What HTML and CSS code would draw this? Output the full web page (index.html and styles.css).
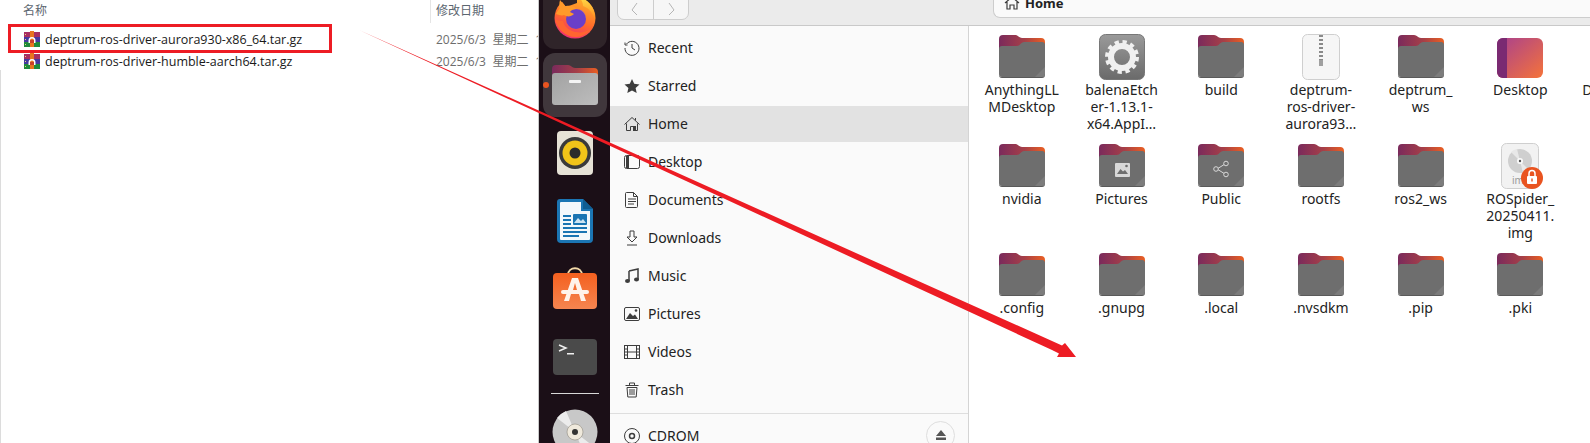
FILE: index.html
```html
<!DOCTYPE html>
<html lang="en">
<head>
<meta charset="utf-8">
<title>deptrum-ros-driver</title>
<link rel="stylesheet" href="styles.css">
</head>
<body>

<svg class="defs" width="0" height="0" aria-hidden="true">
	<defs>
		<linearGradient id="tabGrad" x1="0" y1="0" x2="1" y2="0">
			<stop offset="0" stop-color="#7a2a5c"/>
			<stop offset=".55" stop-color="#a63f48"/>
			<stop offset="1" stop-color="#ea5f22"/>
		</linearGradient>
		<linearGradient id="deskGrad" x1="0" y1="0" x2="1" y2="1">
			<stop offset="0" stop-color="#a8408f"/>
			<stop offset="1" stop-color="#f5733a"/>
		</linearGradient>
		<linearGradient id="gearGrad" x1="0" y1="0" x2="0" y2="1">
			<stop offset="0" stop-color="#9a9a9a"/>
			<stop offset="1" stop-color="#6a6a6a"/>
		</linearGradient>
		<linearGradient id="shopGrad" x1="0" y1="0" x2="0" y2="1">
			<stop offset="0" stop-color="#f4601f"/>
			<stop offset="1" stop-color="#f58550"/>
		</linearGradient>
		<linearGradient id="filesGrad" x1="0" y1="0" x2="1" y2="1">
			<stop offset="0" stop-color="#a2a2a2"/>
			<stop offset="1" stop-color="#bdbdbd"/>
		</linearGradient>
		<linearGradient id="foxGrad" x1=".7" y1="0" x2=".3" y2="1">
			<stop offset="0" stop-color="#ffb32a"/>
			<stop offset=".55" stop-color="#ff6a2a"/>
			<stop offset="1" stop-color="#ee2a78"/>
		</linearGradient>
		<linearGradient id="flameGrad" x1="0" y1="0" x2="0" y2="1">
			<stop offset="0" stop-color="#ffe04a"/>
			<stop offset="1" stop-color="#ff8a1f"/>
		</linearGradient>

		<symbol id="folder" viewBox="0 0 46 46">
			<path d="M0 5a4 4 0 0 1 4-4h12c3 0 4 3 7 3h19a4 4 0 0 1 4 4v16H0z" fill="url(#tabGrad)"/>
			<path d="M0 15a3 3 0 0 1 3-3h15c3 0 4-4 7-4h18a3 3 0 0 1 3 3v29a3 3 0 0 1-3 3H3a3 3 0 0 1-3-3z" fill="#6e6e6e"/>
			<path d="M46 33v7a3 3 0 0 1-3 3h-7z" fill="#7c7c7c"/>
			<path d="M0 40a3 3 0 0 0 3 3h40a3 3 0 0 0 3-3v1a3 3 0 0 1-3 3H3a3 3 0 0 1-3-3z" fill="#5a5a5a"/>
		</symbol>

		<symbol id="rar" viewBox="0 0 16 16">
			<rect x="0" y="1" width="16" height="5" fill="#a82f62"/>
			<rect x="0" y="6" width="16" height="5" fill="#45399f"/>
			<rect x="0" y="11" width="16" height="5" fill="#1f8a3c"/>
			<path d="M1 3h1v1H1zM1 8h1v1H1zM1 13h1v1H1z" fill="#e8e070"/>
			<rect x="6" y="0" width="4" height="16" fill="#e8751f"/>
			<path d="M4.500 12V9.500a3.500 3.500 0 0 1 7 0V12h-1.500V9.500a2 2 0 0 0-4 0V12z" fill="#fff"/>
			<rect x="6" y="9" width="4" height="3" fill="#c8402a"/>
		</symbol>
	</defs>
</svg>

<div class="screen">

	<section class="winpane">
		<div class="win-head">
			<div class="win-col-name">名称</div>
			<div class="win-col-date">修改日期</div>
		</div>
		<div class="win-row">
			<div class="win-name"><svg class="win-icon"><use href="#rar"/></svg>deptrum-ros-driver-aurora930-x86_64.tar.gz</div>
			<div class="win-date">2025/6/3 星期二 11:18</div>
		</div>
		<div class="win-row">
			<div class="win-name"><svg class="win-icon"><use href="#rar"/></svg>deptrum-ros-driver-humble-aarch64.tar.gz</div>
			<div class="win-date">2025/6/3 星期二 11:18</div>
		</div>
	</section>

	<nav class="dock">
		<div class="dock-slot is-open">
			<svg width="44" height="44" viewBox="0 0 44 44">
				<circle cx="22" cy="23" r="20.500" fill="url(#foxGrad)"/>
				<path d="M7 4l6 8 11-4V0H4z" fill="#2f2429"/>
				<path d="M7 5c-1 4-1 7 0 10l6-3z" fill="#ff9a2a"/>
				<path d="M25 1c9 3 18 11 17 24-2-7-6-12-12-14 0-4-2-7-5-10z" fill="url(#flameGrad)"/>
				<circle cx="23" cy="24" r="10" fill="#6a3fc8"/>
				<path d="M23 14a10 10 0 0 1 10 10c0-6-4-10-10-10z" fill="#8a5fe0"/>
				<path d="M3 19c2-5 6-8 10-8 4-1 8 0 11 3-4 0-6 1-7 3 1 1 3 1 4 2-3 3-7 3-10 1-2 1-5 0-8-1z" fill="#ff9a2a"/>
				<path d="M2 24c2 10 11 19 22 18 9-1 15-7 18-16-2 8-10 13-19 11-7-1-12-6-13-11-3 0-6-1-8-2z" fill="#ff6530"/>
			</svg>
		</div>
		<div class="dock-slot is-open is-running">
			<svg width="46" height="42" viewBox="0 0 46 42">
				<path d="M0 5a4 4 0 0 1 4-4h12c3 0 4 3 7 3h19a4 4 0 0 1 4 4v14H0z" fill="url(#tabGrad)"/>
				<path d="M0 12a3 3 0 0 1 3-3h40a3 3 0 0 1 3 3v26a3 3 0 0 1-3 3H3a3 3 0 0 1-3-3z" fill="url(#filesGrad)"/>
				<rect x="17" y="16" width="12" height="3" rx="1" fill="#f4f4f4"/>
			</svg>
		</div>
		<div class="dock-slot">
			<svg width="36" height="44" viewBox="0 0 36 44">
				<rect width="36" height="44" rx="4" fill="#e6e2d6"/>
				<circle cx="18" cy="22" r="16" fill="#3a3a3a"/>
				<circle cx="18" cy="22" r="12.500" fill="#f1c419"/>
				<circle cx="18" cy="22" r="5.500" fill="#2b2b2b"/>
			</svg>
		</div>
		<div class="dock-slot">
			<svg width="36" height="44" viewBox="0 0 36 44">
				<path d="M3 0h23l10 10v30a4 4 0 0 1-4 4H4a4 4 0 0 1-4-4V3a3 3 0 0 1 3-3z" fill="#1b75b3"/>
				<path d="M4 3h20v9h9v28a1 1 0 0 1-1 1H4a1 1 0 0 1-1-1V4a1 1 0 0 1 1-1z" fill="#f4f8fb"/>
				<path d="M26 0l10 10H26z" fill="#0f5d92"/>
				<g fill="#1b75b3">
					<rect x="6" y="16" width="8" height="2"/>
					<rect x="6" y="20" width="8" height="2"/>
					<rect x="6" y="24" width="8" height="2"/>
					<rect x="6" y="28" width="24" height="2"/>
					<rect x="6" y="32" width="24" height="2"/>
					<rect x="6" y="36" width="16" height="2"/>
					<rect x="16" y="15" width="14" height="11" rx="1"/>
				</g>
				<path d="M17 24l4-5 3 3 2-2 3 4z" fill="#cfe4f2"/>
			</svg>
		</div>
		<div class="dock-slot">
			<svg width="44" height="44" viewBox="0 0 44 44">
				<path d="M15 8c0-9 14-9 14 0" fill="none" stroke="#f2d9a8" stroke-width="1.800"/>
				<rect y="6" width="44" height="36" rx="4" fill="url(#shopGrad)"/>
				<path d="M19 11h6l8 23h-5l-2-7h-8l-2 7h-5zM20 23h4l-2-7z" fill="#fff3ea"/>
				<rect x="8" y="23" width="28" height="4" rx="2" fill="#fff3ea"/>
			</svg>
		</div>
		<div class="dock-slot">
			<svg width="44" height="36" viewBox="0 0 44 36">
				<rect width="44" height="36" rx="4" fill="#4a4a4a"/>
				<path d="M6 6l7 3-7 3" fill="none" stroke="#f0f0f0" stroke-width="1.500"/>
				<rect x="14" y="14" width="7" height="1.500" fill="#f0f0f0"/>
			</svg>
		</div>
		<div class="dock-sep"></div>
		<div class="dock-slot">
			<svg width="46" height="46" viewBox="0 0 46 46">
				<circle cx="23" cy="23" r="22.500" fill="#c8c8c8"/>
				<path d="M23 23L5 9a22.500 22.500 0 0 1 9-7zM23 23l18 14a22.500 22.500 0 0 1-9 7z" fill="#ececec"/>
				<circle cx="23" cy="23" r="8" fill="#efe9dc" stroke="#8f8a80" stroke-width=".6"/>
				<circle cx="23" cy="23" r="3" fill="#333"/>
			</svg>
		</div>
	</nav>

	<div class="files">
		<header class="toolbar">
			<div class="navbtns">
				<div class="navbtn"><svg width="8" height="14" viewBox="0 0 8 14"><path d="M6 1L1 8l5 5" fill="none" stroke="#b5b5b5"/></svg></div>
				<div class="navbtn"><svg width="8" height="14" viewBox="0 0 8 14"><path d="M2 1l5 7-5 5" fill="none" stroke="#b5b5b5"/></svg></div>
			</div>
			<div class="pathbar">
				<svg width="16" height="16" viewBox="0 0 16 16"><path d="M1 8l7-6 7 6M3 7v7h3v-4h4v4h3V7" fill="none" stroke="#3d3d3d" stroke-width="1.200"/></svg>
				<span>Home</span>
			</div>
		</header>

		<div class="panes">
			<aside class="sidebar">
				<div class="side-row">
					<svg class="side-icon" viewBox="0 0 16 16"><path d="M2.500 4A7 7 0 1 1 1 8M1 2.500V5h2.500M8 4v4l3 2" fill="none" stroke="#3d3d3d" stroke-width="1"/></svg>Recent
				</div>
				<div class="side-row">
					<svg class="side-icon" viewBox="0 0 16 16"><path d="M8 1l2.200 4.800 5.300.6-3.900 3.500 1.100 5.200L8 12.400l-4.700 2.700 1.100-5.200L.5 6.400l5.300-.6z" fill="#3d3d3d"/></svg>Starred
				</div>
				<div class="side-row is-current">
					<svg class="side-icon" viewBox="0 0 16 16"><path d="M.5 8.500L8 1.500l7.500 7M2.500 7.500v7h4v-4h3v4h4v-7M11.500 2v2.500" fill="none" stroke="#3d3d3d" stroke-width="1"/><rect x="9" y="10" width="3" height="5" fill="#3d3d3d"/></svg>Home
				</div>
				<div class="side-row">
					<svg class="side-icon" viewBox="0 0 16 16"><rect x=".5" y="1.500" width="15" height="13" rx="2" fill="none" stroke="#3d3d3d"/><path d="M2 2h3v12H2z" fill="#3d3d3d"/></svg>Desktop
				</div>
				<div class="side-row">
					<svg class="side-icon" viewBox="0 0 16 16"><path d="M2.500.5h7l4 4v10a1 1 0 0 1-1 1h-10a1 1 0 0 1-1-1v-13a1 1 0 0 1 1-1zM9.500.5v4h4M4 7h8M4 9.500h8M4 12h6" fill="none" stroke="#3d3d3d"/></svg>Documents
				</div>
				<div class="side-row">
					<svg class="side-icon" viewBox="0 0 16 16"><path d="M6 1h4v6h3l-5 5-5-5h3zM3 15h10" fill="none" stroke="#3d3d3d"/></svg>Downloads
				</div>
				<div class="side-row">
					<svg class="side-icon" viewBox="0 0 16 16"><path d="M5 3l9-2v10.500M5 3v10" fill="none" stroke="#3d3d3d" stroke-width="1.500"/><ellipse cx="3.500" cy="13" rx="2.500" ry="2" fill="#3d3d3d"/><ellipse cx="12.500" cy="11.500" rx="2.500" ry="2" fill="#3d3d3d"/></svg>Music
				</div>
				<div class="side-row">
					<svg class="side-icon" viewBox="0 0 16 16"><rect x=".5" y="1.500" width="15" height="13" rx="1.500" fill="none" stroke="#3d3d3d"/><path d="M2 13l4-6 3 3 2-1.500 3 4.500z" fill="#3d3d3d"/><circle cx="12" cy="4.500" r="1.300" fill="#3d3d3d"/></svg>Pictures
				</div>
				<div class="side-row">
					<svg class="side-icon" viewBox="0 0 16 16"><rect x=".5" y="1.500" width="15" height="13" fill="none" stroke="#3d3d3d"/><path d="M3.500 2v12M12.500 2v12M1 8h2.500M12.500 8H15M1 5h2.500M12.500 5H15M1 11h2.500M12.500 11H15M3.500 8h9" fill="none" stroke="#3d3d3d"/></svg>Videos
				</div>
				<div class="side-row">
					<svg class="side-icon" viewBox="0 0 16 16"><path d="M1.500 3.500h13M5.500 3V1h5v2M3 5.500l.8 9.500h8.400l.8-9.500zM6 7v6M8 7v6M10 7v6" fill="none" stroke="#3d3d3d"/></svg>Trash
				</div>
				<div class="side-sep"></div>
				<div class="side-row">
					<svg class="side-icon" viewBox="0 0 16 16"><circle cx="8" cy="8" r="7.500" fill="none" stroke="#3d3d3d"/><circle cx="8" cy="8" r="2.500" fill="none" stroke="#3d3d3d" stroke-width="1.500"/></svg>CDROM
					<div class="eject"><svg width="10" height="10" viewBox="0 0 10 10"><path d="M5 0l5 6H0zM0 7.500h10V10H0z" fill="#555"/></svg></div>
				</div>
			</aside>

			<main class="grid">
				<div class="item"><svg class="item-icon"><use href="#folder"/></svg><div class="item-label">AnythingLL<br>MDesktop</div></div>
				<div class="item">
					<svg class="item-icon" viewBox="0 0 46 46">
						<rect x=".5" y=".5" width="45" height="45" rx="6" fill="url(#gearGrad)" stroke="#777"/>
						<circle cx="23" cy="23" r="11" fill="none" stroke="#f0f0f0" stroke-width="6"/>
						<circle cx="23" cy="23" r="15" fill="none" stroke="#f0f0f0" stroke-width="4" stroke-dasharray="4.200 3.660"/>
					</svg>
					<div class="item-label">balenaEtch<br>er-1.13.1-<br>x64.AppI…</div>
				</div>
				<div class="item"><svg class="item-icon"><use href="#folder"/></svg><div class="item-label">build</div></div>
				<div class="item">
					<svg class="item-icon" viewBox="0 0 46 46">
						<rect x="4.500" y=".5" width="37" height="45" rx="5" fill="#f6f6f6" stroke="#cfcfcf"/>
						<path d="M23 1v31" stroke="#8a8a8a" stroke-width="4" stroke-dasharray="2 2"/>
						<rect x="21" y="26" width="4" height="6" fill="#a0a0a0"/>
					</svg>
					<div class="item-label">deptrum-<br>ros-driver-<br>aurora93…</div>
				</div>
				<div class="item"><svg class="item-icon"><use href="#folder"/></svg><div class="item-label">deptrum_<br>ws</div></div>
				<div class="item">
					<svg class="item-icon" viewBox="0 0 46 46">
						<rect y="4" width="46" height="40" rx="6" fill="url(#deskGrad)"/>
						<path d="M6 4h4v40H6a6 6 0 0 1-6-6V10a6 6 0 0 1 6-6z" fill="#7a2a72"/>
					</svg>
					<div class="item-label">Desktop</div>
				</div>
				<div class="item"><svg class="item-icon"><use href="#folder"/></svg><div class="item-label">Documents</div></div>

				<div class="item"><svg class="item-icon"><use href="#folder"/></svg><div class="item-label">nvidia</div></div>
				<div class="item">
					<svg class="item-icon" viewBox="0 0 46 46">
						<use href="#folder" width="46" height="46"/>
						<rect x="16" y="20" width="15" height="14" rx="1" fill="#d8d8d8"/>
						<path d="M18 31l3.500-5 2.500 2.500 2-1.500 3 4z" fill="#6e6e6e"/>
						<circle cx="27.500" cy="23" r="1.300" fill="#6e6e6e"/>
					</svg>
					<div class="item-label">Pictures</div>
				</div>
				<div class="item">
					<svg class="item-icon" viewBox="0 0 46 46">
						<use href="#folder" width="46" height="46"/>
						<path d="M19 26l8-5M19 26l8 5" stroke="#d8d8d8"/>
						<g fill="#6e6e6e" stroke="#d8d8d8"><circle cx="18" cy="26" r="2.300"/><circle cx="28" cy="20.500" r="2.300"/><circle cx="28" cy="31.500" r="2.300"/></g>
					</svg>
					<div class="item-label">Public</div>
				</div>
				<div class="item"><svg class="item-icon"><use href="#folder"/></svg><div class="item-label">rootfs</div></div>
				<div class="item"><svg class="item-icon"><use href="#folder"/></svg><div class="item-label">ros2_ws</div></div>
				<div class="item">
					<svg class="item-icon" viewBox="0 0 46 46">
						<rect x="4.500" y=".5" width="37" height="45" rx="5" fill="#f2f2f2" stroke="#cfcfcf"/>
						<circle cx="23" cy="18" r="12" fill="#cfcfcf"/>
						<path d="M23 18l-9-9a12 12 0 0 1 6-3zM23 18l9 9a12 12 0 0 1-6 3z" fill="#e8e8e8"/>
						<circle cx="23" cy="18" r="3" fill="#fafafa"/>
						<circle cx="23" cy="18" r="1.200" fill="#555"/>
						<text x="15" y="41" class="img-tag">img</text>
						<circle cx="35" cy="35" r="11" fill="#e95420"/>
						<rect x="30" y="33" width="10" height="8" rx="1" fill="#fff"/>
						<path d="M32 33v-2.500a3 3 0 0 1 6 0V33" fill="none" stroke="#fff" stroke-width="1.500"/>
						<rect x="34.300" y="35.500" width="1.400" height="3" fill="#e95420"/>
					</svg>
					<div class="item-label">ROSpider_<br>20250411.<br>img</div>
				</div>
				<div class="item"></div>

				<div class="item"><svg class="item-icon"><use href="#folder"/></svg><div class="item-label">.config</div></div>
				<div class="item"><svg class="item-icon"><use href="#folder"/></svg><div class="item-label">.gnupg</div></div>
				<div class="item"><svg class="item-icon"><use href="#folder"/></svg><div class="item-label">.local</div></div>
				<div class="item"><svg class="item-icon"><use href="#folder"/></svg><div class="item-label">.nvsdkm</div></div>
				<div class="item"><svg class="item-icon"><use href="#folder"/></svg><div class="item-label">.pip</div></div>
				<div class="item"><svg class="item-icon"><use href="#folder"/></svg><div class="item-label">.pki</div></div>
			</main>
		</div>
	</div>

	<!-- red marks drawn over the screenshot -->
	<svg class="marks" width="1590" height="443" viewBox="0 0 1590 443">
		<rect x="9.500" y="25.500" width="321" height="26" fill="none" stroke="#ed1c24" stroke-width="3"/>
		<path d="M359 30L1062 345.500L1065 343L1076 357L1057 357L1059 353.500L1052 350Z" fill="#ed1c24"/>
	</svg>
</div>

</body>
</html>
```

FILE: styles.css
```css
html, body {
	margin: 0;
	padding: 0;
	background: #fff;
}
.defs {
	display: block;
	height: 0;
}
.screen {
	position: relative;
	display: flex;
	width: 1590px;
	height: 443px;
	overflow: hidden;
}

/* windows explorer part */
.winpane {
	width: 539px;
	flex: none;
	overflow: hidden;
	background: #fff linear-gradient(#dcdcdc, #dcdcdc) 0 70px / 1px 100% no-repeat;
	font-family: "Open Sans", "Noto Sans CJK SC", sans-serif;
	font-size: 12.5px;
}
.win-head {
	display: flex;
	height: 28px;
	color: #5c6670;
	font-family: "Noto Sans CJK SC", sans-serif;
	font-size: 12px;
	line-height: 20px;
}
.win-col-name {
	width: 407px;
	height: 23px;
	padding-left: 23px;
	border-right: 1px solid #e5e5e5;
}
.win-col-date {
	padding-left: 5px;
}
.win-row {
	display: flex;
	height: 22px;
	align-items: center;
	white-space: nowrap;
}
.win-name {
	display: flex;
	align-items: center;
	gap: 5px;
	flex: none;
	width: 412px;
	padding-left: 24px;
	color: #1a1a1a;
}
.win-icon {
	width: 16px;
	height: 16px;
	flex: none;
}
.win-date {
	color: #6d6d6d;
	font-size: 12px;
	word-spacing: 3.5px;
}

/* launcher */
.dock {
	width: 71px;
	flex: none;
	display: flex;
	flex-direction: column;
	align-items: center;
	gap: 4px;
	margin-top: -15px;
	height: 480px;
	background: #1b0f17;
	box-shadow: -1px 0 0 #c9c9c9;
}
.dock-slot {
	position: relative;
	display: flex;
	align-items: center;
	justify-content: center;
	width: 64px;
	height: 64px;
	flex: none;
	border-radius: 12px;
}
.is-open {
	background: #2f2429;
}
.is-running {
	background: #40373c;
}
.is-running::before {
	content: "";
	position: absolute;
	left: 0;
	top: 29px;
	width: 6px;
	height: 6px;
	border-radius: 50%;
	background: #e95420;
}
.dock-sep {
	width: 48px;
	height: 1px;
	margin-bottom: 2px;
	background: #d8d8d8;
	flex: none;
}

/* nautilus */
.files {
	flex: 1;
	display: flex;
	flex-direction: column;
	min-width: 0;
	font-family: "Noto Sans", sans-serif;
	font-size: 14px;
	color: #222;
}
.toolbar {
	display: flex;
	height: 25px;
	flex: none;
	background: #ebebeb;
	border-bottom: 1px solid #c9c9c9;
}
.navbtns {
	display: flex;
	width: 70px;
	height: 30px;
	margin: -12px 0 0 7px;
	background: #f6f6f6;
	border: 1px solid #cdcdcd;
	border-radius: 7px;
}
.navbtn {
	display: flex;
	flex: 1;
	justify-content: center;
	align-items: flex-end;
	padding-bottom: 3px;
}
.navbtn + .navbtn {
	border-left: 1px solid #cdcdcd;
}
.pathbar {
	display: flex;
	align-items: center;
	gap: 5px;
	flex: 1;
	height: 30px;
	margin: -12px 0 0 304px;
	padding-left: 10px;
	box-sizing: border-box;
	background: #fafafa;
	border: 1px solid #cdcdcd;
	border-right: 0;
	border-radius: 7px 0 0 7px;
	font-weight: 700;
	font-size: 13px;
}
.panes {
	display: flex;
	flex: 1;
	min-height: 0;
}
.sidebar {
	width: 358px;
	flex: none;
	display: flex;
	flex-direction: column;
	gap: 2px;
	padding-top: 4px;
	background: #fafafa;
	border-right: 1px solid #d4d4d4;
}
.side-row {
	display: flex;
	align-items: center;
	gap: 8px;
	box-sizing: border-box;
	height: 36px;
	flex: none;
	padding: 0 14px 2px;
}
.is-current {
	background: #e2e2e2;
}
.side-icon {
	width: 16px;
	height: 16px;
	flex: none;
	margin-top: 2px;
}
.side-sep {
	height: 1px;
	flex: none;
	margin: 3px 0 2px;
	background: #dedede;
}
.eject {
	display: flex;
	align-items: center;
	justify-content: center;
	width: 27px;
	height: 27px;
	margin-left: auto;
	margin-right: -1px;
	border: 1px solid #dedede;
	border-radius: 50%;
}

.grid {
	flex: 1;
	min-width: 0;
	overflow: hidden;
	display: grid;
	grid-template-columns: repeat(7, 99.7px);
	grid-auto-rows: 109.2px;
	padding: 8px 0 0 3px;
	background: #fff;
}
.item-icon {
	display: block;
	width: 46px;
	height: 46px;
	margin: 0 auto;
}
.item-label {
	margin-top: 1px;
	line-height: 17px;
	text-align: center;
	white-space: nowrap;
}
.img-tag {
	font-family: "Noto Sans", sans-serif;
	font-size: 10px;
	fill: #9a9a9a;
}

.marks {
	position: absolute;
	left: 0;
	top: 0;
	pointer-events: none;
}
```
